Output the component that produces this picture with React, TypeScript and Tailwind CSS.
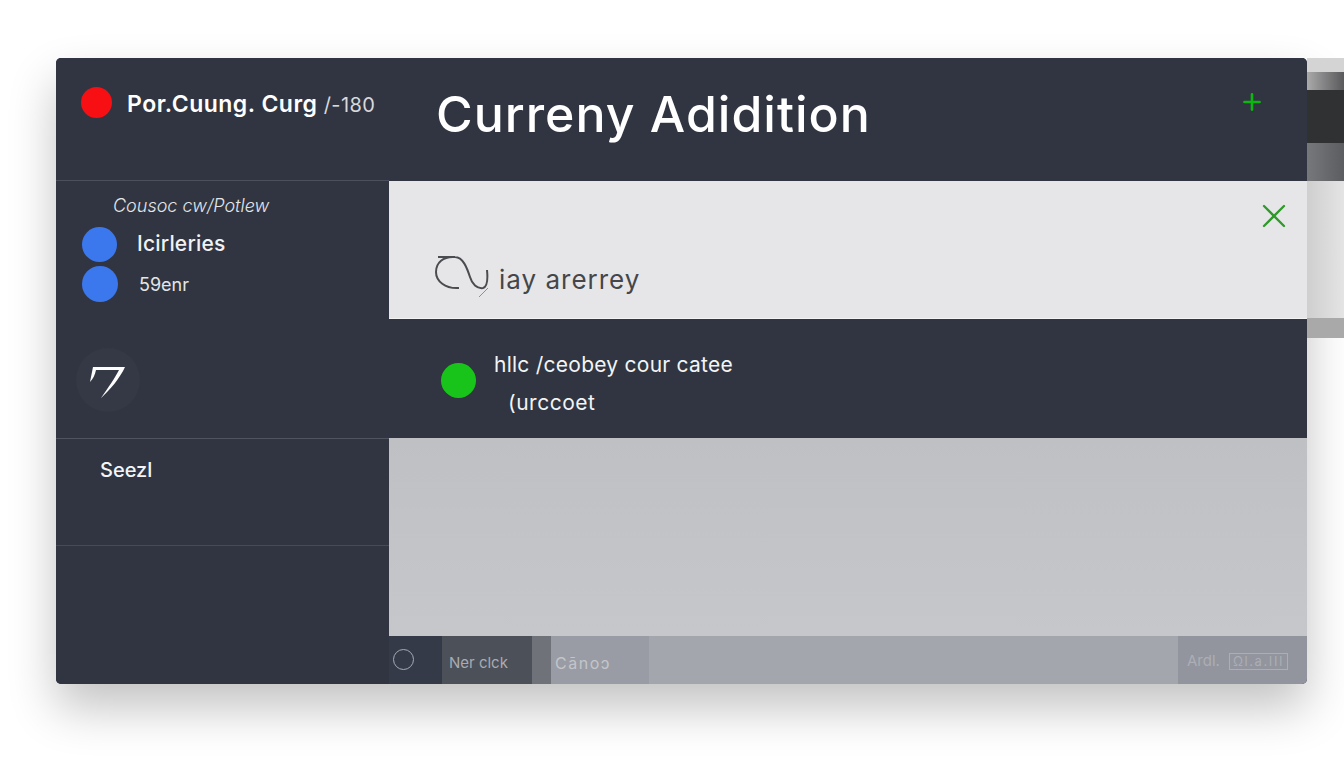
import { Plus, X } from 'lucide-react';

function Dot({ className }: { className: string }) {
  return <span className={`block shrink-0 rounded-full ${className}`} />;
}

function Sidebar() {
  return (
    <aside className="flex w-[333px] shrink-0 flex-col bg-[#303541] text-white">
      {/* Brand */}
      <div className="flex h-[123px] shrink-0 items-start border-b border-[#4b505c] pt-[29px] pl-[25px]">
        <Dot className="h-[31px] w-[31px] bg-[#f70f13]" />
        <span className="ml-[15px] text-[23px] leading-[34px] font-semibold tracking-[0.5px] whitespace-nowrap">
          Por.Cuung. Curg <span className="text-[20px] font-normal tracking-[0.4px] text-[#d8d9dc]">/-180</span>
        </span>
      </div>
      {/* Accounts */}
      <div className="h-[258px] shrink-0 border-b border-[#4f5460] pl-[26px]">
        <p className="mt-[13px] ml-[31px] text-[18px] leading-6 font-light text-[#e4e5e8] italic">Cousoc cw/Potlew</p>
        <div className="mt-[8px] flex h-9 items-center gap-[20px]">
          <Dot className="h-[35px] w-[35px] bg-[#3b78ee]" />
          <span className="text-[21px] font-medium tracking-[0.2px] text-[#f1f2f4]">Icirleries</span>
        </div>
        <div className="mt-[4px] flex h-9 items-center gap-[21px]">
          <Dot className="h-9 w-9 bg-[#3b78ee]" />
          <span className="text-[18px] text-[#e4e5e8]">59enr</span>
        </div>
        <div className="mt-[46px] -ml-[6px] flex h-16 w-16 items-center justify-center rounded-full bg-[#343945]">
          <svg width="36" height="33" viewBox="0 0 36 33" fill="none" className="mt-[4px]">
            <path d="M0 16 L3 1 H35 C30 12 20 24 11 32 C18 22 25 12 29 4 H6 C5 9 3 13 0 16Z" fill="#fdfdfd" />
          </svg>
        </div>
      </div>
      {/* Section */}
      <div className="h-[107px] shrink-0 border-b border-[#464b57] pt-[17px] pl-[44px]">
        <span className="text-[20px] leading-7 font-medium text-[#f4f4f6]">Seezl</span>
      </div>
    </aside>
  );
}

function FooterBar() {
  return (
    <div className="flex h-[48px] w-full text-[15px]">
      <div className="flex w-[53px] items-center bg-[#343a47] pl-[4px]">
        <Dot className="-mt-[2px] h-[21px] w-[21px] border border-[#a8abb3]" />
      </div>
      <div className="flex w-[90px] items-center bg-[#4c5059] pt-[6px] pl-[7px] text-[#a9abb2]">Ner clck</div>
      <div className="w-[19px] bg-[#6f7279]" />
      <div className="flex w-[98px] items-center bg-[#999ca4] pt-[6px] pl-[4px] text-[16px] tracking-[1.5px] text-[#c3c5ca]">Cānoɔ</div>
      <div className="flex-1 bg-[#a4a6ad]" />
      <div className="flex w-[129px] items-center gap-[9px] bg-[#92959e] pt-[2px] pl-[9px] text-[#abaeb4]">
        <span>Ardl.</span>
        <span className="border border-[#abaeb4] px-[3px] text-[13px] leading-[15px] tracking-[1.6px] whitespace-nowrap">Ωl.a.III</span>
      </div>
    </div>
  );
}

function Main() {
  return (
    <main className="flex min-w-0 flex-1 flex-col">
      {/* Title bar */}
      <div className="flex h-[123px] shrink-0 items-start justify-between bg-[#303541] pt-[23px] pr-[42px] pl-[47px]">
        <h1 className="text-[50px] leading-[66px] font-medium tracking-[1px] text-white">Curreny Adidition</h1>
        <Plus className="mt-[8px] text-[#0bb80f]" size={26} strokeWidth={2.4} />
      </div>

      {/* Input panel */}
      <div className="relative flex h-[137px] shrink-0 items-start bg-[#e6e6e8] pt-[75px] pl-[46px]">
        <svg width="56" height="42" viewBox="0 0 56 42" fill="none" stroke="#4a4c50" strokeWidth="2" className="shrink-0">
          <path d="M3 1 H20 C8 0 1 7 1 16 C1 25 10 33 24 32 M20 1 C28 1 32 12 35 21 C37 28 42 33 48 32 C52 31 53 24 52 14" />
          <path d="M53 32 L44 41" strokeWidth="1" stroke="#8d8f93" />
        </svg>
        <span className="mt-[6px] ml-[8px] text-[26px] leading-9 tracking-[1px] text-[#44464b]">iay arerrey</span>
        <X className="absolute top-[15px] right-[13px] text-[#2f9a2a]" size={40} strokeWidth={1.4} />
      </div>

      {/* Status row */}
      <div className="flex h-[120px] shrink-0 items-center border-t border-[#f3f3f4] bg-[#303541] pl-[52px] text-[#f3f4f5]">
        <Dot className="mt-[4px] h-[35px] w-[35px] bg-[#19c41a]" />
        <div className="mt-[11px] ml-[18px]">
          <p className="text-[21px] leading-[38px] tracking-[0.25px]">hllc /ceobey cour catee</p>
          <p className="pl-[14px] text-[21px] leading-[38px] tracking-[0.5px]">(urccoet</p>
        </div>
      </div>

      {/* Empty content */}
      <div className="flex-1 bg-gradient-to-b from-[#bfc0c3] to-[#c6c7ca]" />
      <FooterBar />
    </main>
  );
}

export default function App() {
  return (
    <div className='flex h-screen w-[1344px] overflow-hidden bg-white pt-[58px] pl-[56px] font-["Inter",sans-serif]'>
      <div className="flex h-[626px] w-[1251px] shrink-0 overflow-hidden rounded-[5px] bg-[#303541] shadow-[0_24px_48px_rgba(0,0,0,0.24)]">
        <Sidebar />
        <Main />
      </div>
      {/* Blurred window behind */}
      <div className="flex h-[282px] flex-1 flex-col">
        <div className="h-[14px] bg-[#d4d4d5]" />
        <div className="h-[18px] bg-gradient-to-r from-[#aaaaab] to-[#5a5a5c]" />
        <div className="h-[53px] bg-[#303133]" />
        <div className="h-[38px] bg-gradient-to-r from-[#77787b] to-[#5c5d60]" />
        <div className="h-[137px] bg-gradient-to-r from-[#cfcfd0] to-[#e4e4e5]" />
        <div className="h-[20px] bg-[#a9a9aa]" />
      </div>
    </div>
  );
}
